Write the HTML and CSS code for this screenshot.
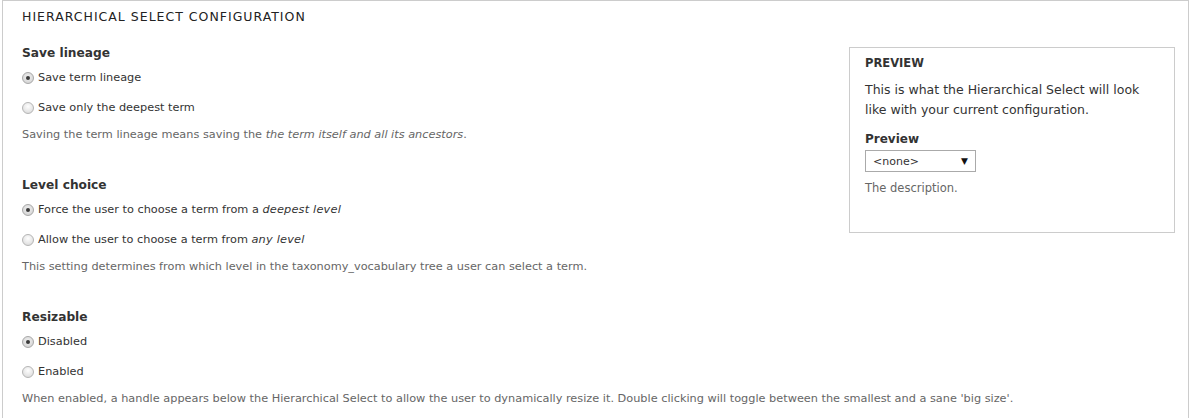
FILE: index.html
```html
<!DOCTYPE html>
<html>
<head>
<meta charset="utf-8">
<link rel="stylesheet" href="styles.css">
</head>
<body>
<div class="fieldset">
  <div class="legend">Hierarchical Select configuration</div>
  <div class="content">
    <div class="preview">
      <div class="preview-title">Preview</div>
      <div class="preview-text">This is what the Hierarchical Select will look like with your current configuration.</div>
      <div class="preview-label">Preview</div>
      <div class="select"><span>&lt;none&gt;</span><span class="arrow">&#9660;</span></div>
      <div class="preview-desc">The description.</div>
    </div>
    <div class="main">
      <div class="section">
        <div class="label">Save lineage</div>
        <div class="option"><span class="radio checked"></span><span>Save term lineage</span></div>
        <div class="option"><span class="radio"></span><span>Save only the deepest term</span></div>
        <div class="desc">Saving the term lineage means saving the <em>the term itself and all its ancestors</em>.</div>
      </div>
      <div class="section">
        <div class="label">Level choice</div>
        <div class="option"><span class="radio checked"></span><span>Force the user to choose a term from a <em>deepest level</em></span></div>
        <div class="option"><span class="radio"></span><span>Allow the user to choose a term from <em>any level</em></span></div>
        <div class="desc">This setting determines from which level in the taxonomy_vocabulary tree a user can select a term.</div>
      </div>
      <div class="section">
        <div class="label">Resizable</div>
        <div class="option"><span class="radio checked"></span><span>Disabled</span></div>
        <div class="option"><span class="radio"></span><span>Enabled</span></div>
        <div class="desc">When enabled, a handle appears below the Hierarchical Select to allow the user to dynamically resize it. Double clicking will toggle between the smallest and a sane 'big size'.</div>
      </div>
    </div>
  </div>
</div>
</body>
</html>
```

FILE: styles.css
```css
html, body {
  margin: 0;
  padding: 0;
  background: #fff;
}
body {
  font-family: "DejaVu Sans", Verdana, sans-serif;
  color: #333;
  font-size: 11px;
}
.fieldset {
  margin: 0 11px 0 2px;
  border: 1px solid #ccc;
  border-bottom: none;
  padding: 0 13px 20px 19px;
}
.legend {
  text-transform: uppercase;
  font-size: 12.5px;
  letter-spacing: 1px;
  line-height: 20px;
  padding-top: 6px;
  color: #222;
}
.content {
  display: flow-root;
}
.main {
  padding-top: 16px;
}
.section {
  margin-bottom: 30px;
}
.label {
  font-weight: bold;
  font-size: 12.2px;
  line-height: 20px;
  margin-bottom: 5px;
}
.option {
  display: flex;
  align-items: center;
  line-height: 20px;
  margin-bottom: 10px;
  font-size: 11.3px;
}
.option + .option {
  margin-bottom: 7px;
}
.option em {
  letter-spacing: 0.2px;
}
.radio {
  width: 12px;
  height: 12px;
  border-radius: 50%;
  border: 1px solid #b5b5b5;
  background: radial-gradient(circle at 50% 35%, #fefefe 0%, #e6e6e6 60%, #d4d4d4 100%);
  margin-right: 4px;
  box-sizing: border-box;
  position: relative;
  flex: none;
}
.radio.checked {
  background: radial-gradient(circle at 50% 40%, #f0f0f0 0%, #d8d8d8 70%, #c8c8c8 100%);
  border-color: #a8a8a8;
}
.radio.checked::after {
  content: "";
  position: absolute;
  left: 3px;
  top: 3px;
  width: 4px;
  height: 4px;
  border-radius: 50%;
  background: #3a3a3a;
}
.desc {
  color: #666;
  font-size: 11.3px;
  line-height: 20px;
}
em {
  font-style: italic;
}
.preview {
  float: right;
  width: 326px;
  box-sizing: border-box;
  border: 1px solid #ccc;
  margin-top: 20px;
  margin-left: 20px;
  padding: 5px 15px 34px 15px;
}
.preview-title {
  text-transform: uppercase;
  font-weight: bold;
  font-size: 11.5px;
  line-height: 20px;
}
.preview-text {
  font-size: 12.5px;
  line-height: 20px;
  margin-top: 7px;
}
.preview-label {
  font-weight: bold;
  font-size: 12px;
  line-height: 20px;
  margin-top: 9px;
}
.select {
  margin-top: 1px;
  width: 111px;
  height: 22px;
  box-sizing: border-box;
  border: 1px solid #aaa;
  display: flex;
  align-items: center;
  justify-content: space-between;
  padding: 0 7px 0 7px;
  font-size: 11px;
  color: #333;
}
.arrow {
  font-size: 9px;
  color: #111;
}
.preview-desc {
  color: #666;
  font-size: 11.5px;
  line-height: 20px;
  margin-top: 6px;
}
```
